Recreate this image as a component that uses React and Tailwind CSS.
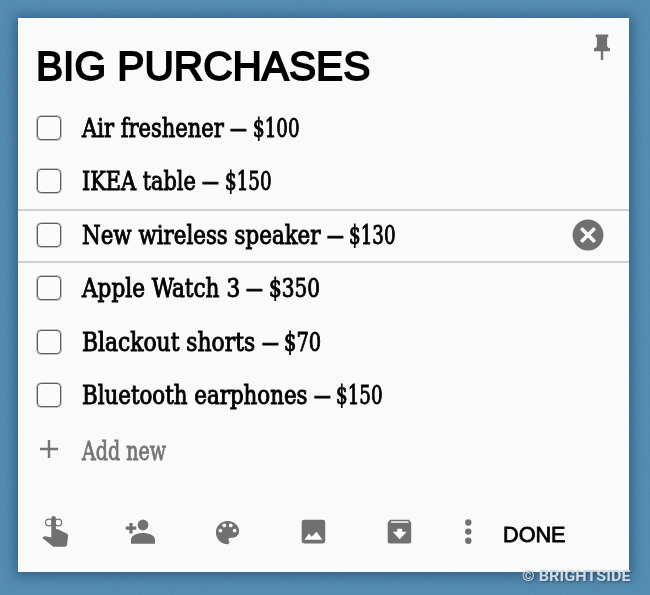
import { useLayoutEffect, useRef, useState } from 'react';

const ITEMS = [
  { name: 'Air freshener', nameWidth: 142, price: '$100', priceWidth: 47 },
  { name: 'IKEA table', nameWidth: 114, price: '$150', priceWidth: 47 },
  { name: 'New wireless speaker', nameWidth: 238.5, price: '$130', priceWidth: 47, active: true },
  { name: 'Apple Watch 3', nameWidth: 158, price: '$350', priceWidth: 51.5 },
  { name: 'Blackout shorts', nameWidth: 173.5, price: '$70', priceWidth: 37.5 },
  { name: 'Bluetooth earphones', nameWidth: 225.5, price: '$150', priceWidth: 47 },
];

const SLAB = "font-['DejaVu_Serif_Condensed','DejaVu_Serif',serif] [font-stretch:condensed] text-[26px] leading-[30px]";

// Squeezes one line of text horizontally to the given width
function FitText({ width, className, children }) {
  const ref = useRef(null);
  const [scale, setScale] = useState(1);

  useLayoutEffect(() => {
    setScale(width / ref.current.offsetWidth);
  }, [width]);

  return (
    <span className="block" style={{ width }}>
      <span
        ref={ref}
        className={`inline-block origin-left whitespace-nowrap ${className}`}
        style={{ transform: `scaleX(${scale})` }}
      >
        {children}
      </span>
    </span>
  );
}

function Item({ name, nameWidth, price, priceWidth, active }) {
  const text = `${SLAB} text-black [-webkit-text-stroke:0.9px_black]`;

  return (
    <li
      className={`flex items-center border-y-2 pb-[2px] pl-[19px] pr-[25px] ${
        active ? 'h-[54px] border-[#cfcfcf]' : 'h-[53.2px] border-transparent'
      }`}
    >
      <span className="size-6 shrink-0 rounded-[4px] border border-[#5c5c5c] shadow-[0_0_0_0.5px_#8a8a8a]" />
      <div className="ml-[21px] flex flex-1 gap-[6px]">
        <FitText width={nameWidth} className={text}>{name}</FitText>
        <FitText width={16.5} className={text}>—</FitText>
        <FitText width={priceWidth} className={text}>{price}</FitText>
      </div>
      {active && (
        <svg className="size-8" viewBox="0 0 32 32">
          <circle cx="16" cy="16" r="15.4" fill="#707070" />
          <path d="M9.2 9.2l13.6 13.6M22.8 9.2L9.2 22.8" stroke="#fafafa" strokeWidth="3.6" />
        </svg>
      )}
    </li>
  );
}

function Toolbar() {
  return (
    <div className="flex h-10 items-center pl-[18px] text-[#707070]">
      <svg className="h-10 w-10" viewBox="36 512 40 40" fill="currentColor">
        <path d="M51.3 518.3a2.3 2.3 0 0 1 4.6 0V529l2 .2 8.2 4.1c1.5.7 2.1 1.6 2 3l-1.1 8.5c-.2 1.2-.8 2-2 2H54.4c-.8 0-1.5-.3-2-.9L42.3 538l1.2-1.2c.5-.4 1-.6 1.8-.5l6 1.2z" />
        <g fill="none" stroke="currentColor" strokeWidth="1.2">
          <circle cx="49" cy="522.5" r="3.4" />
          <circle cx="58.3" cy="522.5" r="3.4" />
        </g>
      </svg>
      <svg className="ml-[45px] h-10 w-10" viewBox="121 512 40 40" fill="currentColor">
        <circle cx="143" cy="525" r="5.4" />
        <path d="M131 543.7v-4c0-4.4 6-6.7 12-6.7s12 2.3 12 6.7v4z" />
        <path d="M129.4 523h3.2v3.6h3.7v3.2h-3.7v3.6h-3.2v-3.6h-3.7v-3.2h3.7z" />
      </svg>
      <svg className="ml-[50.8px] size-[31px]" viewBox="0 0 24 24" fill="currentColor">
        <path d="M12 3c-4.97 0-9 4.03-9 9s4.03 9 9 9c.83 0 1.5-.67 1.5-1.5 0-.39-.15-.74-.39-1.01-.23-.26-.38-.61-.38-.99 0-.83.67-1.5 1.5-1.5H16c2.76 0 5-2.24 5-5 0-4.42-4.03-8-9-8zm-5.5 9c-.83 0-1.5-.67-1.5-1.5S5.67 9 6.5 9 8 9.67 8 10.5 7.33 12 6.5 12zm3-4C8.67 8 8 7.33 8 6.5S8.67 5 9.5 5s1.5.67 1.5 1.5S10.33 8 9.5 8zm5 0c-.83 0-1.5-.67-1.5-1.5S13.67 5 14.5 5s1.5.67 1.5 1.5S15.33 8 14.5 8zm3 4c-.83 0-1.5-.67-1.5-1.5S16.67 9 17.5 9s1.5.67 1.5 1.5-.67 1.5-1.5 1.5z" />
      </svg>
      <svg className="ml-[50.2px] h-10 w-10" viewBox="293 512 40 40" fill="currentColor">
        <rect x="301.7" y="519.7" width="23.5" height="23.8" rx="2.4" />
        <path d="M304.3 539.7l4.8-6.2 2.6 3.2 4.9-5 5.8 8z" fill="#fafafa" />
      </svg>
      <svg className="ml-[46px] h-10 w-10" viewBox="379 512 40 40" fill="currentColor">
        <path d="M390 519.7h19l2.2 3v18.3a2.5 2.5 0 0 1-2.5 2.5h-18.5a2.5 2.5 0 0 1-2.5-2.5v-18.3z" />
        <path d="M391.5 521h16.5l1 1.9h-18.5z" fill="#dadada" />
        <path d="M397.2 528.7h5v3h4.5l-7 7.6-7-7.6h4.5z" fill="#fafafa" />
      </svg>
      <svg className="ml-[39px] h-10 w-5" viewBox="458 512 20 40" fill="currentColor">
        <circle cx="468.3" cy="522.5" r="3.2" />
        <circle cx="468.3" cy="531.6" r="3.2" />
        <circle cx="468.3" cy="540.7" r="3.2" />
      </svg>
      <button className="ml-[25.5px] mt-[6px]">
        <FitText
          width={63}
          className="font-['Liberation_Sans',Arial,sans-serif] text-[22px] leading-6 text-black [-webkit-text-stroke:0.8px_black]"
        >
          DONE
        </FitText>
      </button>
    </div>
  );
}

export default function App() {
  return (
    <div className="relative h-[595px] w-[650px] overflow-hidden bg-[#4f8ab2] p-[18px] pr-[21px]">
      {/* Paper grain */}
      <svg className="absolute inset-0 h-full w-full opacity-10">
        <filter id="grain">
          <feTurbulence type="fractalNoise" baseFrequency="0.6" numOctaves="2" />
          <feColorMatrix type="saturate" values="0" />
        </filter>
        <rect width="100%" height="100%" filter="url(#grain)" />
      </svg>

      <main className="relative flex h-[554px] flex-col bg-[#fafafa] shadow-[0_1px_12px_3px_rgba(15,50,80,0.5)]">
        <header className="flex h-[84.5px] items-start justify-between pl-[17.5px] pr-[15px]">
          <h1 className="mt-[24px]">
            <FitText
              width={334}
              className="font-['Liberation_Sans',Arial,sans-serif] text-[41.5px] leading-[48px] text-black [-webkit-text-stroke:1.8px_black]"
            >
              BIG PURCHASES
            </FitText>
          </h1>
          <svg className="mt-3 h-9 w-6" viewBox="590 30 24 36" fill="#707070">
            <path d="M595.7 34.6h12.6v2.6h-1.2v8.8c.2 1.3 1.3 1.9 2.9 2.6v2.6h-16v-2.6c1.6-.7 2.7-1.3 2.9-2.6v-8.8h-1.2z" />
            <path d="M600.8 51h2.4v9h-2.4z" />
          </svg>
        </header>

        <ul className="flex flex-col">
          {ITEMS.map((item) => (
            <Item key={item.name} {...item} />
          ))}
        </ul>

        <div className="flex h-[54px] items-center pl-[21px]">
          <svg className="size-5" viewBox="0 0 20 20" stroke="#757575" strokeWidth="2.4">
            <path d="M1 10h18M10 1v18" />
          </svg>
          <div className="ml-[23px] mt-[3px]">
            <FitText width={84} className={`${SLAB} text-[#757575] [-webkit-text-stroke:0.8px_#757575]`}>
              Add new
            </FitText>
          </div>
        </div>

        <div className="mt-auto pb-5">
          <Toolbar />
        </div>
      </main>

      <div className="absolute left-[522px] top-[563px]">
        <FitText
          width={109}
          className="font-[Roboto,sans-serif] text-[15px] font-bold leading-5 text-[#cfdce7] [text-shadow:1px_1px_2px_rgba(40,60,80,0.7)]"
        >
          © BRIGHTSIDE
        </FitText>
      </div>
    </div>
  );
}
